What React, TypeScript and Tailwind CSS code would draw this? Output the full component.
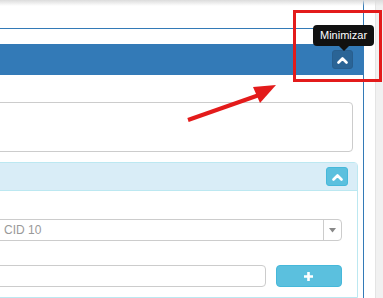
import React from 'react'

const ChevronUp = () => (
  <svg width="11" height="8" viewBox="0 0 11 8" fill="none">
    <path d="M1.5 6.5 L5.5 2.5 L9.5 6.5" stroke="white" strokeWidth="2.6" strokeLinecap="round" strokeLinejoin="round" />
  </svg>
)

export default function App() {
  return (
    <div className="relative w-[383px] h-[298px] overflow-hidden bg-white flex font-['Liberation_Sans',Arial,sans-serif]">
      {/* top shadow */}
      <div className="absolute left-0 top-0 w-full h-[6px] bg-gradient-to-b from-[#dcdcdc] to-white/0" />

      {/* main column */}
      <div className="w-[364px] h-full border-r border-[#337ab7] flex flex-col shrink-0">
        <div className="h-[28px]" />
        <div className="h-px bg-[#337ab7]" />
        <div className="h-[15px]" />

        {/* primary panel header */}
        <div className="h-[31px] bg-[#337ab7] flex items-center justify-end pr-[10px]">
          <button className="w-[21px] h-[19px] rounded-[3px] bg-[#2a6496] border border-[#285e8e] flex items-center justify-center">
            <ChevronUp />
          </button>
        </div>

        <div className="h-[27px]" />

        {/* textarea */}
        <div className="h-[50px] -ml-[5px] mr-[10px] border border-[#cccccc] rounded-[4px]" />

        <div className="h-[10px]" />

        {/* info panel */}
        <div className="flex-1 -ml-[5px] mr-[5px] border border-[#bce8f1] rounded-t-[4px] flex flex-col">
          <div className="h-[28px] bg-[#d9edf7] border-b border-[#bce8f1] flex items-center justify-end pr-[9px]">
            <button className="w-[22px] h-[19px] rounded-[3px] bg-[#5bc0de] border border-[#46b8da] flex items-center justify-center">
              <ChevronUp />
            </button>
          </div>
          <div className="flex flex-col pt-[28px] pr-[15px]">
            <div className="h-[22px] border border-[#cccccc] rounded-[4px] flex items-center">
              <span className="flex-1 pl-[7px] text-[12px] text-[#999999] leading-none">CID 10</span>
              <div className="w-[18px] h-full border-l border-[#cccccc] flex items-center justify-center">
                <svg width="7" height="5" viewBox="0 0 7 5">
                  <path d="M0 0 L7 0 L3.5 4.5 Z" fill="#888888" />
                </svg>
              </div>
            </div>
            <div className="h-[24px]" />
            <div className="flex items-center gap-[10px]">
              <div className="w-[272px] h-[22px] border border-[#cccccc] rounded-[4px]" />
              <button className="w-[67px] h-[22px] rounded-[4px] bg-[#5bc0de] border border-[#46b8da] flex items-center justify-center">
                <svg width="11" height="11" viewBox="0 0 11 11">
                  <path d="M5.5 1 V10 M1 5.5 H10" stroke="white" strokeWidth="2.6" />
                </svg>
              </button>
            </div>
          </div>
        </div>
      </div>

      <div className="w-[11px] shrink-0" />

      {/* scrollbar */}
      <div className="flex-1 bg-[#f1f1f1] border-l border-[#e4e4e4]" />

      {/* tooltip */}
      <div className="absolute left-[313px] top-[25px] flex flex-col items-center">
        <div className="h-[21px] px-[7px] bg-[#111111] rounded-[4px] flex items-center text-[11px] text-white leading-none">
          Minimizar
        </div>
        <div className="w-0 h-0 border-l-[5px] border-r-[5px] border-t-[5px] border-l-transparent border-r-transparent border-t-[#111111]" />
      </div>

      {/* red highlight box */}
      <div className="absolute left-[293px] top-[10px] w-[89px] h-[72px] border-[3px] border-[#e31b1b]" />

      {/* red arrow */}
      <svg className="absolute left-0 top-0" width="383" height="298">
        <line x1="188" y1="120" x2="262" y2="94" stroke="#e31b1b" strokeWidth="4" />
        <path d="M276 85 L253 87 L260 103 Z" fill="#e31b1b" />
      </svg>
    </div>
  )
}
